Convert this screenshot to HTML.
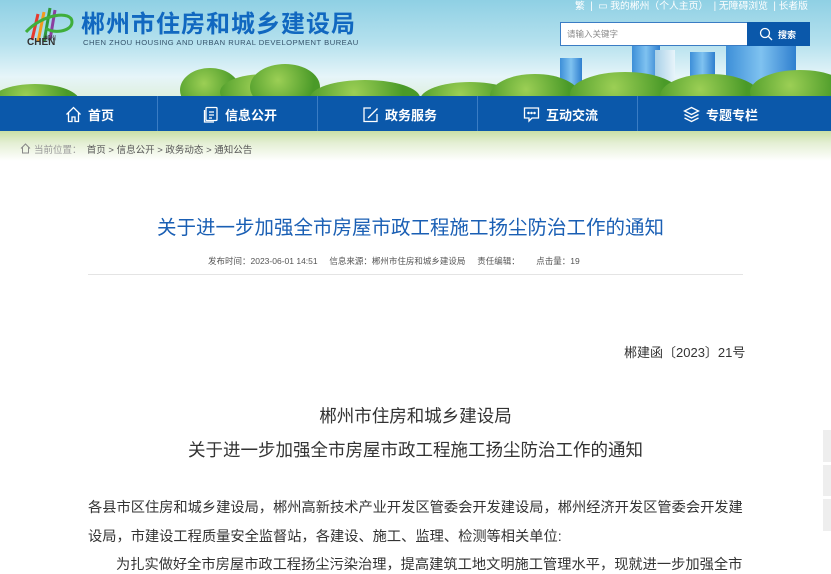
<!DOCTYPE html>
<html><head><meta charset="utf-8">
<style>
*{margin:0;padding:0;box-sizing:border-box}
body{width:831px;height:567px;overflow:hidden;background:#fff;font-family:"Liberation Sans","Noto Sans CJK SC",sans-serif;position:relative}
.hdr{position:absolute;left:0;top:0;width:831px;height:96px;background:linear-gradient(#8fd0e4 0%,#b5e1ee 45%,#e6f5f9 80%,#dff0e0 100%);overflow:hidden}
.tree{position:absolute;border-radius:50%;background:radial-gradient(circle at 40% 35%,#9ccf55,#4a9a28 70%)}
.bld{position:absolute;background:linear-gradient(90deg,#3d8fd8,#7fc2f0,#2f7fcf)}
.t{position:absolute;white-space:nowrap}
.nav{position:absolute;left:0;top:96px;width:831px;height:35px;background:#0b58aa;color:#fff;font-size:13px;font-weight:bold}
.nav .d{position:absolute;top:0;width:1px;height:35px;background:#3a7cc4}
.nav .i{position:absolute;top:9px;height:18px;display:flex;align-items:center;gap:6px}
.crumb{position:absolute;left:0;top:131px;width:831px;height:30px;background:linear-gradient(#c9dfa6 0%,#e4efd4 40%,#fff 100%)}
.b{position:absolute;left:88px;font-size:14.24px;color:#333;white-space:nowrap}
</style></head><body>
<div class="hdr">
  <div class="bld" style="left:632px;top:45px;width:28px;height:40px"></div>
  <div class="bld" style="left:655px;top:50px;width:20px;height:35px;background:linear-gradient(90deg,#a8d0e8,#e8f4fa)"></div>
  <div class="bld" style="left:690px;top:52px;width:25px;height:35px"></div>
  <div class="bld" style="left:726px;top:45px;width:70px;height:40px"></div>
  <div class="bld" style="left:560px;top:58px;width:22px;height:28px"></div>
  <div class="tree" style="left:-10px;top:84px;width:90px;height:36px"></div>
  <div class="tree" style="left:180px;top:68px;width:60px;height:44px"></div>
  <div class="tree" style="left:220px;top:74px;width:90px;height:36px"></div>
  <div class="tree" style="left:250px;top:64px;width:70px;height:46px"></div>
  <div class="tree" style="left:310px;top:80px;width:110px;height:36px"></div>
  <div class="tree" style="left:420px;top:82px;width:100px;height:36px"></div>
  <div class="tree" style="left:490px;top:74px;width:90px;height:44px"></div>
  <div class="tree" style="left:570px;top:72px;width:110px;height:44px"></div>
  <div class="tree" style="left:660px;top:74px;width:100px;height:44px"></div>
  <div class="tree" style="left:750px;top:70px;width:100px;height:44px"></div>
  <svg style="position:absolute;left:22px;top:4px" width="56" height="44" viewBox="0 0 56 44">
    <path d="M10 36 L16 10" stroke="#e63a2f" stroke-width="3"/>
    <path d="M16 38 L22 8" stroke="#f39a1e" stroke-width="3"/>
    <path d="M22 38 L28 4" stroke="#2e9a3a" stroke-width="3"/>
    <path d="M28 36 L33 6" stroke="#8a3fa0" stroke-width="3"/>
    <path d="M4 28 C20 10 50 6 50 18 C50 28 30 30 24 24" stroke="#3fae3a" stroke-width="3" fill="none"/>
  </svg>
  <div class="t" style="left:44px;top:33px;font-size:6px;color:#333">郴州</div>
  <div class="t" style="left:27px;top:37px;font-size:10px;color:#333;font-weight:bold">CHEN</div>
  <div class="t" style="left:81px;top:4px;font-size:24px;font-weight:bold;color:#1168c0;letter-spacing:1px">郴州市住房和城乡建设局</div>
  <div class="t" style="left:83px;top:38px;font-size:7.6px;color:#35536b;letter-spacing:0.5px">CHEN ZHOU HOUSING AND URBAN RURAL DEVELOPMENT BUREAU</div>
  <div class="t" style="left:575px;top:-2px;font-size:9.8px;color:#fff">繁 &nbsp;|&nbsp; ▭ 我的郴州（个人主页） &nbsp;|&nbsp;无障碍浏览 &nbsp;|&nbsp;长者版</div>
  <div style="position:absolute;left:560px;top:22px;width:188px;height:24px;background:#fff;border:1px solid #3a7cc4"></div>
  <div class="t" style="left:567px;top:28px;font-size:8.5px;color:#888">请输入关键字</div>
  <div style="position:absolute;left:747px;top:22px;width:63px;height:24px;background:#0b58aa"></div>
  <svg style="position:absolute;left:759px;top:27px" width="14" height="14" viewBox="0 0 14 14"><circle cx="6" cy="6" r="4.5" stroke="#fff" stroke-width="1.3" fill="none"/><path d="M9.5 9.5 L13 13" stroke="#fff" stroke-width="1.3"/></svg>
  <div class="t" style="left:778px;top:28px;font-size:9px;color:#fff;font-weight:bold">搜索</div>
</div>
<div class="nav">
  <div class="d" style="left:157px"></div><div class="d" style="left:317px"></div><div class="d" style="left:477px"></div><div class="d" style="left:637px"></div>
  <div class="i" style="left:65px"><svg width="17" height="17" viewBox="0 0 17 17" fill="none" stroke="#fff" stroke-width="1.3"><path d="M1.5 8.5 L8.5 1.5 L15.5 8.5 M3.5 7 V15.5 H7 V11 H10 V15.5 H13.5 V7"/></svg>首页</div>
  <div class="i" style="left:203px"><svg width="16" height="17" viewBox="0 0 16 17" fill="none" stroke="#fff" stroke-width="1.3"><rect x="3" y="1.5" width="11" height="13" rx="1"/><path d="M1.5 4 V16 H11 M6 6 H11 M6 9 H11 M6 12 H9"/></svg>信息公开</div>
  <div class="i" style="left:362px"><svg width="17" height="17" viewBox="0 0 17 17" fill="none" stroke="#fff" stroke-width="1.3"><path d="M9 2 H2 V15.5 H15 V8 M6 12 L15.5 2.5"/></svg>政务服务</div>
  <div class="i" style="left:523px"><svg width="17" height="17" viewBox="0 0 17 17" fill="none" stroke="#fff" stroke-width="1.3"><path d="M1.5 2 H15.5 V12 H9 L6 15 V12 H1.5 Z"/><circle cx="5.5" cy="7" r=".6" fill="#fff"/><circle cx="8.5" cy="7" r=".6" fill="#fff"/><circle cx="11.5" cy="7" r=".6" fill="#fff"/></svg>互动交流</div>
  <div class="i" style="left:683px"><svg width="17" height="17" viewBox="0 0 17 17" fill="none" stroke="#fff" stroke-width="1.3"><path d="M8.5 1.5 L15.5 5 L8.5 8.5 L1.5 5 Z M1.5 8.5 L8.5 12 L15.5 8.5 M1.5 12 L8.5 15.5 L15.5 12"/></svg>专题专栏</div>
</div>
<div class="crumb">
  <svg style="position:absolute;left:20px;top:12px" width="11" height="11" viewBox="0 0 11 11" fill="none" stroke="#888" stroke-width="1"><path d="M1 5.5 L5.5 1 L10 5.5 M2.5 4.5 V10 H8.5 V4.5"/></svg>
  <div class="t" style="left:34px;top:11px;font-size:9.5px;color:#999">当前位置：&nbsp; <span style="color:#555">首页 &gt; 信息公开 &gt; 政务动态 &gt; 通知公告</span></div>
</div>
<div class="t" style="left:157px;top:211px;font-size:19.5px;color:#1a5fb4">关于进一步加强全市房屋市政工程施工扬尘防治工作的通知</div>
<div class="t" style="left:208px;top:255px;font-size:8.5px;color:#555">发布时间：2023-06-01 14:51 &nbsp;&nbsp;&nbsp; 信息来源：郴州市住房和城乡建设局 &nbsp;&nbsp;&nbsp; 责任编辑： &nbsp;&nbsp;&nbsp;&nbsp;&nbsp; 点击量：19</div>
<div style="position:absolute;left:88px;top:274px;width:655px;height:1px;background:#e4e4e4"></div>
<div class="t" style="left:624px;top:342px;font-size:13px;color:#333">郴建函〔2023〕21号</div>
<div class="t" style="left:0;width:831px;text-align:center;top:403px;font-size:17.5px;color:#333">郴州市住房和城乡建设局</div>
<div class="t" style="left:0;width:831px;text-align:center;top:437px;font-size:17.5px;color:#333">关于进一步加强全市房屋市政工程施工扬尘防治工作的通知</div>
<div class="b" style="top:496px">各县市区住房和城乡建设局，郴州高新技术产业开发区管委会开发建设局，郴州经济开发区管委会开发建</div>
<div class="b" style="top:525px">设局，市建设工程质量安全监督站，各建设、施工、监理、检测等相关单位:</div>
<div class="b" style="top:553px;left:116px">为扎实做好全市房屋市政工程扬尘污染治理，提高建筑工地文明施工管理水平，现就进一步加强全市</div>
<div style="position:absolute;left:823px;top:430px;width:8px;height:32px;background:#eee"></div>
<div style="position:absolute;left:823px;top:465px;width:8px;height:31px;background:#eee"></div>
<div style="position:absolute;left:823px;top:499px;width:8px;height:32px;background:#eee"></div>
</body></html>
